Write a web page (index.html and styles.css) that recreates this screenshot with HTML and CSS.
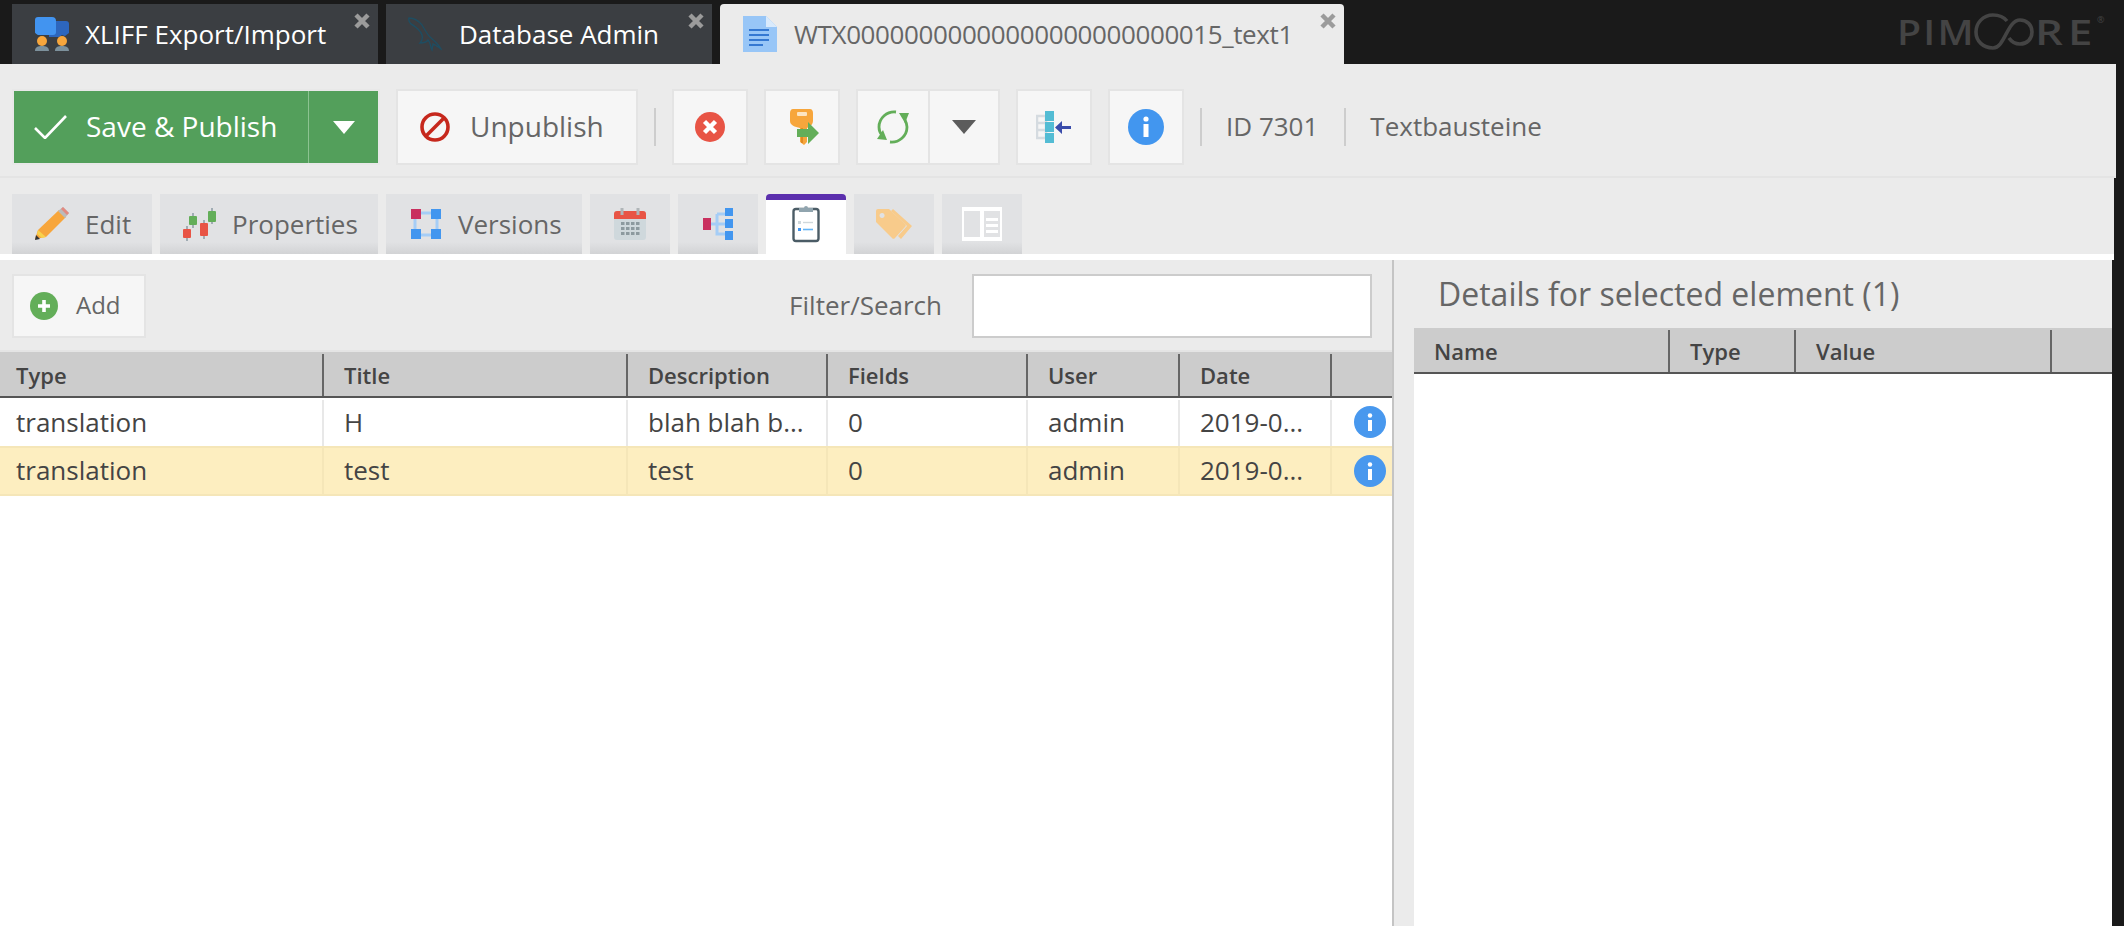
FILE: index.html
```html
<!DOCTYPE html>
<html lang="de">
<head>
  <meta charset="UTF-8" />
  <title>Pimcore</title>
  <link rel="stylesheet" href="styles.css">
</head>
<body>
  <div class="topbar">
    <div class="doc-tab dark w1">
      <svg class="tab-icon" viewBox="0 0 34 34"><path d="M14 4h17a3 3 0 0 1 3 3v13H14z" fill="#2d66bd"/><path d="M3 0h14a4 4 0 0 1 4 4v11a3 3 0 0 1-3 3H3a3 3 0 0 1-3-3V3a3 3 0 0 1 3-3z" fill="#4294f0"/><path d="M0 16l4 3 3-1 3 2h14l3-2 3 1 4-3v5H0z" fill="#3b3e42"/><circle cx="7" cy="24" r="5" fill="#f7a63c"/><circle cx="27" cy="24" r="5" fill="#f7a63c"/><path d="M0 34c0-4 3-5 7-5s7 1 7 5zM20 34c0-4 3-5 7-5s7 1 7 5z" fill="#7d919c"/></svg>
      <span>XLIFF Export/Import</span>
      <svg class="tab-close" viewBox="0 0 16 16"><path d="M2 2l12 12M14 2L2 14" stroke="#9b9b9b" stroke-width="4.5"/></svg>
    </div>
    <div class="doc-tab dark w2">
      <svg class="tab-icon" viewBox="0 0 34 34"><path d="M1 1c5 0 9 2 13 7 3 5 5 9 8 12 3 3 8 6 11 12-3-2-5-4-8-5l-1 6c-2-3-1-7-4-10-2 3-5 3-8 3 2-2 3-4 2-8-1-4-7-9-11-11C2 6 0 4 1 1z" fill="none" stroke="#1f4d61" stroke-width="1.4"/></svg>
      <span>Database Admin</span>
      <svg class="tab-close" viewBox="0 0 16 16"><path d="M2 2l12 12M14 2L2 14" stroke="#9b9b9b" stroke-width="4.5"/></svg>
    </div>
    <div class="doc-tab light w3">
      <svg class="tab-icon" viewBox="0 0 34 36"><path d="M0 0h23l11 11v25H0z" fill="#98c6f7"/><path d="M23 0l11 11H23z" fill="#d9eafc"/><path d="M6 14h20M6 19h20M6 24h20M6 29h14" stroke="#3478d2" stroke-width="2"/></svg>
      <span class="doc-name">WTX00000000000000000000000015_text1</span>
      <svg class="tab-close" viewBox="0 0 16 16"><path d="M2 2l12 12M14 2L2 14" stroke="#9b9b9b" stroke-width="4.5"/></svg>
    </div>
    <div class="logo">
      <span class="logo-start">PIM</span>
      <svg class="logo-ring" viewBox="0 0 60 37"><path d="M33 8C29 3 24 2 19 2 9 2 2 10 2 19S9 35 19 35C31 35 33 7 46 7 53 7 58 12 58 19S53 31 46 31C41 31 37 28 35 25" fill="none" stroke="#444" stroke-width="3.6"/></svg>
      <span class="logo-rest">RE</span>
      <span class="logo-mark">®</span>
    </div>
  </div>

  <div class="toolbar">
    <div class="btn split green">
      <div class="btn-part save-part">
        <svg width="34" height="24" viewBox="0 0 34 24"><path d="M1 13l10 10L32 1" fill="none" stroke="#fff" stroke-width="2.6"/></svg>
        <span class="btn-text">Save &amp; Publish</span>
      </div>
      <div class="btn-part arrow-part">
        <svg width="22" height="13" viewBox="0 0 22 13"><path d="M0 0h22L11 13z" fill="#fff"/></svg>
      </div>
    </div>
    <div class="btn unpublish">
      <svg width="30" height="30" viewBox="0 0 30 30"><circle cx="15" cy="15" r="13" fill="none" stroke="#c6281d" stroke-width="3.6"/><path d="M6 24L24 6" stroke="#c6281d" stroke-width="3.6"/></svg>
      <span class="btn-text">Unpublish</span>
    </div>
    <i class="sep"></i>
    <div class="btn square">
      <svg width="30" height="30" viewBox="0 0 30 30"><circle cx="15" cy="15" r="15" fill="#e85445"/><path d="M9.5 9.5l11 11M20.500 9.500l-11 11" stroke="#fff" stroke-width="4.4"/></svg>
    </div>
    <div class="btn square">
      <svg width="40" height="40" viewBox="0 0 40 40"><path d="M11 2h17c2 0 3 2 3 4v8c0 3-2 5-6 7v14l-3 3-4-3V21c-5-1-10-3-10-7V6c0-2 1-4 3-4z" fill="#f7a63c"/><rect x="15" y="5" width="10" height="4" rx="1" fill="#fde5c2"/><path d="M19 21h2v15h-2z" fill="#e08a22"/><path d="M15 22h11v-7l11 11-11 11v-7H15z" fill="#63ae59"/></svg>
    </div>
    <div class="btn split reload">
      <div class="btn-part reload-part">
        <svg width="34" height="34" viewBox="0 0 34 34"><path d="M20 2C11 1 3 8 3 17c0 3 1 6 3 8" fill="none" stroke="#63ae59" stroke-width="2.800"/><path d="M14 32C23 33 31 26 31 17c0-3-1-5-2-7" fill="none" stroke="#63ae59" stroke-width="2.800"/><path d="M1 29l10 1-4-10zM23 3l10 0-4 10z" fill="#63ae59"/></svg>
      </div>
      <div class="btn-part drop-part">
        <svg width="24" height="14" viewBox="0 0 24 14"><path d="M0 0h24L12 14z" fill="#5c5c5c"/></svg>
      </div>
    </div>
    <div class="btn square">
      <svg width="36" height="32" viewBox="0 0 36 32"><path d="M1 5h9v22H1zM1 12h9M1 19h9" fill="none" stroke="#d5dbe0" stroke-width="2.5"/><path d="M9 0h9v10H9zM9 11h9v10H9zM9 22h9v10H9z" fill="#53bcd4"/><path d="M35 15v3H26v5l-7-6.500 7-6.500v5z" fill="#3a4cab"/></svg>
    </div>
    <div class="btn square">
      <svg width="36" height="36" viewBox="0 0 36 36"><circle cx="18" cy="18" r="18" fill="#4296ef"/><circle cx="18" cy="10" r="2.600" fill="#fff"/><rect x="15.500" y="15" width="5" height="13" fill="#fff"/></svg>
    </div>
    <i class="sep"></i>
    <span class="tb-label id-label">ID 7301</span>
    <i class="sep sep-c"></i>
    <span class="tb-label">Textbausteine</span>
  </div>

  <div class="subtabs">
    <div class="subtab tab-edit">
      <svg width="34" height="34" viewBox="0 0 34 34"><path d="M0 32l3-9L24 3l7 7-20 20z" fill="#f7a63c"/><path d="M23 4l5-4 6 6-4 5z" fill="#bbb"/><path d="M28 0l6 6-2 2-6-6z" fill="#e38a80"/><path d="M3 23l8 7-4 1-5-4z" fill="#f9d24b"/><path d="M0 33l1-5 4 4z" fill="#333"/></svg>
      <span>Edit</span>
    </div>
    <div class="subtab tab-props">
      <svg width="34" height="34" viewBox="0 0 34 34"><path d="M4 19v15M10 6v15M21 13v19M29 1v16" stroke="#8a9aa3" stroke-width="1.500"/><rect x="0" y="22" width="8" height="9" rx="1" fill="#e85445"/><rect x="6" y="9" width="8" height="9" rx="1" fill="#63ae59"/><rect x="17" y="16" width="8" height="13" rx="1" fill="#e85445"/><rect x="25" y="4" width="8" height="11" rx="1" fill="#63ae59"/></svg>
      <span>Properties</span>
    </div>
    <div class="subtab tab-versions">
      <svg width="30" height="30" viewBox="0 0 30 30"><path d="M4 4h22M4 26h22M4 4v22M26 4v22" stroke="#a5cdf6" stroke-width="3"/><rect width="10" height="10" fill="#c9305f"/><rect x="20" width="10" height="10" fill="#4296ef"/><rect y="20" width="10" height="10" fill="#4296ef"/><rect x="20" y="20" width="10" height="10" fill="#4296ef"/></svg>
      <span>Versions</span>
    </div>
    <div class="subtab icon-only">
      <svg width="32" height="32" viewBox="0 0 32 32"><rect y="3" width="32" height="29" rx="3" fill="#cfd8dc"/><path d="M3 3h26a3 3 0 0 1 3 3v5H0V6a3 3 0 0 1 3-3z" fill="#e85445"/><path d="M8 0v7M24 0v7" stroke="#b0b5b8" stroke-width="3"/><g fill="#8d9a9f"><rect x="7" y="14" width="3.500" height="3"/><rect x="12" y="14" width="3.500" height="3"/><rect x="17" y="14" width="3.500" height="3"/><rect x="22" y="14" width="3.500" height="3"/><rect x="7" y="19" width="3.500" height="3"/><rect x="12" y="19" width="3.500" height="3"/><rect x="17" y="19" width="3.500" height="3"/><rect x="22" y="19" width="3.500" height="3"/><rect x="7" y="24" width="3.500" height="3"/><rect x="12" y="24" width="3.500" height="3"/><rect x="17" y="24" width="3.500" height="3"/><rect x="22" y="24" width="3.500" height="3"/></g></svg>
    </div>
    <div class="subtab icon-only">
      <svg width="30" height="32" viewBox="0 0 30 32"><path d="M8 16h14M14 6v20h8M14 6h8" fill="none" stroke="#a5cdf6" stroke-width="3"/><rect y="10" width="8" height="12" fill="#c9305f"/><rect x="22" width="8" height="8" fill="#4296ef"/><rect x="22" y="11" width="8" height="9" fill="#4296ef"/><rect x="22" y="23" width="8" height="9" fill="#4296ef"/></svg>
    </div>
    <div class="subtab icon-only active">
      <svg width="28" height="38" viewBox="0 0 28 38"><rect x="1.500" y="4" width="25" height="32" rx="2.500" fill="#fff" stroke="#4b5c66" stroke-width="2.400"/><path d="M7 7V3h5a2 2 0 0 1 4 0h5v4z" fill="#90a4ae"/><rect x="6" y="16" width="3" height="3" fill="#cfd8dc"/><path d="M11 17.500h10" stroke="#cfd8dc" stroke-width="1.400"/><rect x="6" y="23" width="3" height="3" fill="#4296ef"/><path d="M11 24.500h10" stroke="#64b5f6" stroke-width="1.600"/></svg>
    </div>
    <div class="subtab icon-only">
      <svg width="36" height="30" viewBox="0 0 36 30"><path d="M17 0l19 17-11 13-3-3 9-10L15 2z" fill="#f8cb8b"/><path d="M2 0h11l16 15a2 2 0 0 1 0 3L19 29a2 2 0 0 1-3 0L0 13V2a2 2 0 0 1 2-2zM6 4a2.500 2.500 0 1 0 .1 0z" fill="#f8cb8b" fill-rule="evenodd"/></svg>
    </div>
    <div class="subtab icon-only">
      <svg width="40" height="34" viewBox="0 0 40 34"><path d="M0 0h40v34H0z" fill="#fff"/><path d="M2 4h16v26H2zM22 4h16v26H22z" fill="#e1e2e4"/><path d="M24 11h12v3H24zM24 17h12v3H24zM24 23h12v3H24z" fill="#fff"/></svg>
    </div>
  </div>
  <div class="white-gap"></div>

  <div class="panels">
    <div class="left-panel">
      <div class="grid-tools">
        <div class="btn add">
          <svg width="28" height="28" viewBox="0 0 28 28"><circle cx="14" cy="14" r="14" fill="#63ae59"/><path d="M14 8v12M8 14h12" stroke="#fff" stroke-width="3.600"/></svg>
          <span class="add-text">Add</span>
        </div>
        <label class="filter-label">Filter/Search</label>
        <input class="filter-input" type="text" />
      </div>
      <div class="grid-row head cols-left">
        <div>Type</div><div>Title</div><div>Description</div><div>Fields</div><div>User</div><div>Date</div><div></div>
      </div>
      <div class="grid-row body cols-left">
        <div>translation</div><div>H</div><div>blah blah b...</div><div>0</div><div>admin</div><div>2019-0...</div>
        <div class="info-cell"><svg width="32" height="32" viewBox="0 0 32 32"><circle cx="16" cy="16" r="16" fill="#4898ee"/><circle cx="16" cy="9.500" r="2.200" fill="#fff"/><rect x="14" y="14" width="4" height="11" fill="#fff"/></svg></div>
      </div>
      <div class="grid-row body selected cols-left">
        <div>translation</div><div>test</div><div>test</div><div>0</div><div>admin</div><div>2019-0...</div>
        <div class="info-cell"><svg width="32" height="32" viewBox="0 0 32 32"><circle cx="16" cy="16" r="16" fill="#4898ee"/><circle cx="16" cy="9.500" r="2.200" fill="#fff"/><rect x="14" y="14" width="4" height="11" fill="#fff"/></svg></div>
      </div>
    </div>
    <div class="right-panel">
      <h2 class="details-title">Details for selected element (1)</h2>
      <div class="grid-row head cols-right right-head">
        <div>Name</div><div>Type</div><div>Value</div><div></div>
      </div>
      <div class="details-body"></div>
    </div>
  </div>
</body>
</html>
```

FILE: styles.css
```css
html, body {
  margin: 0;
  height: 926px;
  overflow: hidden;
}

body {
  background-color: #1a1a1a;
  font-family: 'Open Sans', sans-serif;
  color: #555;
  font-size: 26px;
}

/* top document tabs */
.topbar {
  height: 64px;
  display: flex;
  align-items: flex-end;
  padding-left: 12px;
  gap: 8px;
}

.doc-tab {
  height: 60px;
  position: relative;
  display: flex;
  align-items: center;
  box-sizing: border-box;
}

.doc-tab.dark {
  background-color: #3b3e42;
  color: #fff;
}

.doc-tab.light {
  background-color: #ebebeb;
  color: #666;
  border-radius: 4px 4px 0 0;
}

.w1 { width: 366px; padding-left: 23px; }
.w2 { width: 326px; padding-left: 22px; }
.w3 { width: 624px; padding-left: 23px; }

.w1 .tab-icon { margin-right: 16px; }

.doc-name {
  letter-spacing: -0.4px;
}

.tab-icon {
  width: 34px;
  height: 36px;
  margin-right: 17px;
  flex-shrink: 0;
}

.tab-close {
  position: absolute;
  top: 9px;
  right: 8px;
  width: 16px;
  height: 16px;
}

.logo {
  margin-left: auto;
  margin-right: 14px;
  width: 213px;
  height: 62px;
  align-self: flex-start;
  display: flex;
  align-items: center;
  color: #444;
  font-size: 35px;
  font-weight: 600;
  line-height: 1;
}

.logo-start {
  width: 77px;
  letter-spacing: 2px;
  transform: scaleX(1.12);
  transform-origin: left center;
}

.logo-ring {
  width: 60px;
  height: 37px;
  flex-shrink: 0;
}

.logo-rest {
  width: 62px;
  letter-spacing: 4px;
  margin-left: 1px;
  transform: scaleX(1.25);
  transform-origin: left center;
}

.logo-mark {
  font-size: 9px;
  font-weight: 400;
  align-self: flex-start;
  margin-top: 15px;
}

/* main toolbar */
.toolbar {
  width: 2116px;
  height: 114px;
  box-sizing: border-box;
  background-color: #ebebeb;
  border-bottom: 2px solid #e4e4e4;
  padding: 24px 0 10px 12px;
  display: flex;
  align-items: center;
  gap: 16px;
}

.btn {
  height: 76px;
  box-sizing: border-box;
  background-color: #f6f6f6;
  border: 2px solid #e4e4e4;
  display: flex;
  align-items: center;
  font-size: 28px;
  color: #666;
}

.btn-text {
  margin-bottom: 3px;
}

.btn.square {
  width: 76px;
  justify-content: center;
}

.btn.green {
  width: 368px;
  border-color: #e8e8e8;
  background-color: #539f5b;
  color: #fff;
}

.btn.reload {
  width: 144px;
}

.btn-part {
  height: 100%;
  display: flex;
  align-items: center;
  box-sizing: border-box;
}

.save-part {
  width: 295px;
  padding-left: 20px;
  gap: 18px;
  border-right: 1px solid #8cc391;
}

.arrow-part, .drop-part {
  flex: 1;
  justify-content: center;
}

.reload-part {
  width: 72px;
  justify-content: center;
  border-right: 2px solid #e4e4e4;
}

.unpublish {
  width: 242px;
  padding-left: 22px;
  gap: 20px;
}

.sep {
  display: block;
  width: 2px;
  height: 38px;
  background-color: #cdcdcd;
}

.sep-c {
  margin-right: 8px;
}

.id-label {
  margin-left: 8px;
  margin-right: 10px;
}

.tb-label {
  color: #666;
  margin-bottom: 2px;
}

/* editor tabs */
.subtabs {
  width: 2114px;
  height: 76px;
  box-sizing: border-box;
  background-color: #ebebeb;
  padding: 16px 0 0 12px;
  display: flex;
  gap: 8px;
}

.subtab {
  height: 60px;
  box-sizing: border-box;
  padding-left: 23px;
  display: flex;
  align-items: center;
  gap: 15px;
  color: #666;
  background: linear-gradient(#e1e2e4 80%, #d2d3d5);
}

.tab-edit { width: 140px; gap: 16px; }
.tab-props { width: 218px; }
.tab-versions { width: 196px; padding-left: 25px; gap: 17px; }

.subtab.icon-only {
  width: 80px;
  padding: 0;
  justify-content: center;
}

.subtab.active {
  background: #fff;
  border-top: 6px solid #5b2fad;
  border-radius: 4px 4px 0 0;
  padding-bottom: 6px;
}

.white-gap {
  width: 2114px;
  height: 6px;
  background-color: #fff;
}

/* panels below the tabs */
.panels {
  width: 2112px;
  height: 666px;
  display: flex;
  background-color: #fff;
}

.left-panel {
  width: 1392px;
  border-right: 2px solid #c4c4c4;
  flex-shrink: 0;
}

.grid-tools {
  height: 92px;
  box-sizing: border-box;
  background-color: #ebebeb;
  border-bottom: 2px solid #e4e4e4;
  padding: 14px 20px 12px 12px;
  display: flex;
  align-items: flex-start;
}

.btn.add {
  width: 134px;
  height: 64px;
  padding-left: 16px;
  gap: 18px;
  font-size: 24px;
}

.add-text {
  margin-bottom: 3px;
}

.filter-label {
  margin-left: auto;
  margin-right: 30px;
  line-height: 63px;
  color: #666;
}

.filter-input {
  width: 400px;
  height: 64px;
  box-sizing: border-box;
  border: 2px solid #ccc;
  background: #fff;
  margin: 0;
}

.grid-row {
  display: grid;
}

.cols-left {
  grid-template-columns: 324px 304px 200px 200px 152px 152px 60px;
}

.cols-right {
  grid-template-columns: 256px 126px 256px 60px;
}

.grid-row > div {
  box-sizing: border-box;
  padding-left: 20px;
  white-space: nowrap;
  overflow: hidden;
}

.cols-left > div:first-child {
  padding-left: 16px;
}

.head {
  height: 46px;
  background-color: #ccc;
  border-bottom: 2px solid #555;
  box-sizing: border-box;
  color: #444;
  font-size: 22px;
  font-weight: 600;
  line-height: 46px;
}

.head > div {
  position: relative;
}

.head > div:not(:last-child)::after {
  content: "";
  position: absolute;
  top: 2px;
  right: 0;
  bottom: 0;
  width: 2px;
  background-color: #666;
}

.body {
  height: 48px;
  color: #444;
}

.body > div:not(:last-child) {
  border-right: 2px solid #e8e8e8;
  margin-top: 2px;
  line-height: 44px;
}

.selected {
  height: 50px;
  background-color: #fdeec0;
  border-top: 2px solid #f5e6b8;
  border-bottom: 2px solid #f5e6b8;
  box-sizing: border-box;
}

.selected > div:not(:last-child) {
  border-right-color: #f5e6b8;
  margin-top: 0;
  line-height: 44px;
}

.grid-row > .info-cell {
  padding: 0 0 0 22px;
  display: flex;
  align-items: center;
}

.right-panel {
  flex: 1;
  background-color: #ebebeb;
  padding-left: 20px;
  min-width: 0;
}

.details-title {
  margin: 0;
  height: 68px;
  padding-left: 24px;
  line-height: 68px;
  font-size: 32px;
  font-weight: 400;
  color: #666;
}

.details-body {
  height: 552px;
  background-color: #fff;
}
```
